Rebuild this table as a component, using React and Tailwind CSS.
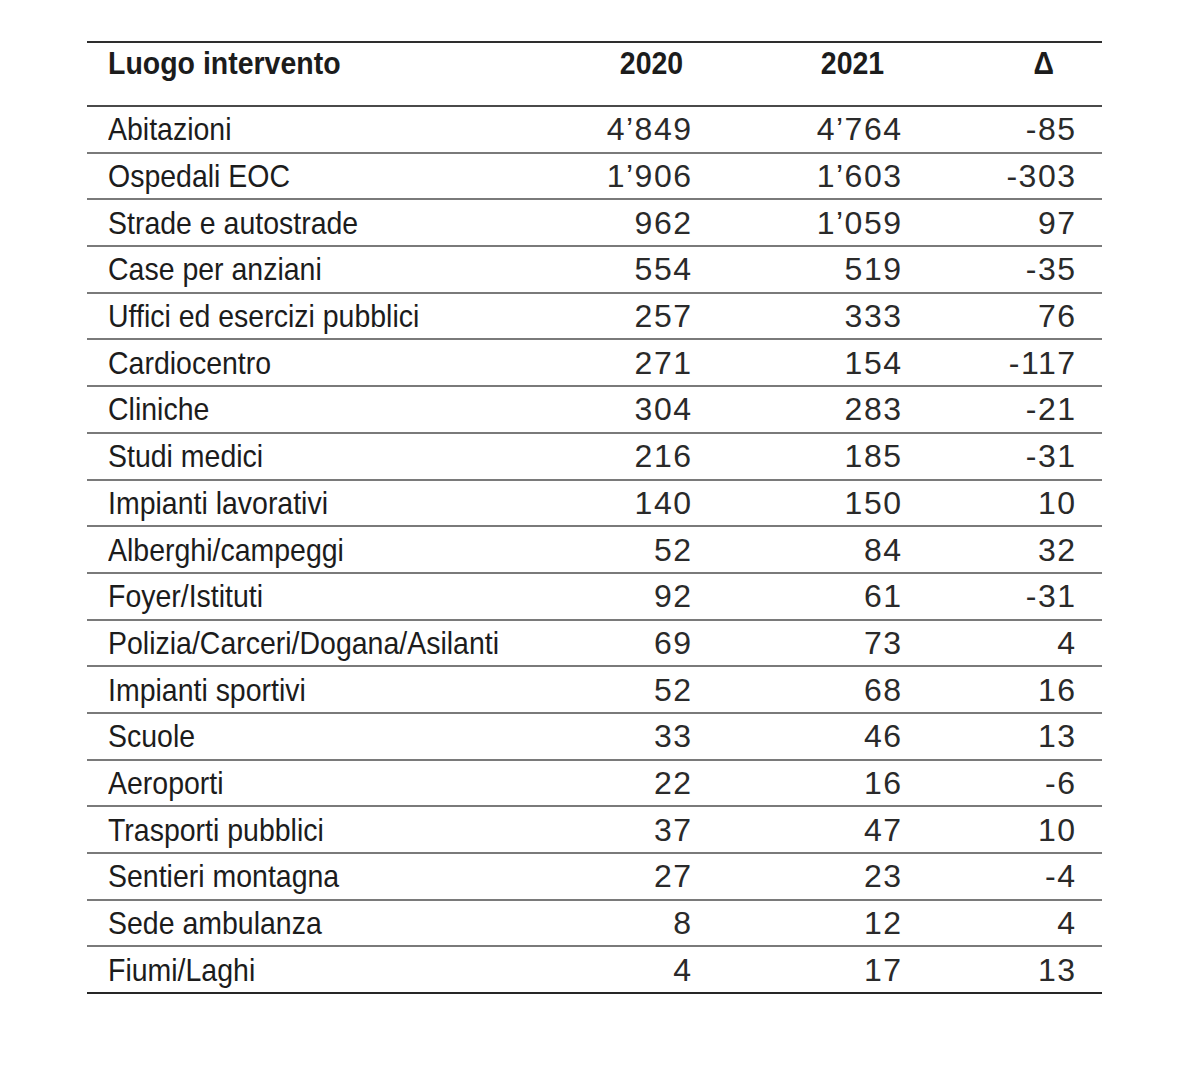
import React from "react";

const rows = [
  ["Abitazioni", "4’849", "4’764", "-85"],
  ["Ospedali EOC", "1’906", "1’603", "-303"],
  ["Strade e autostrade", "962", "1’059", "97"],
  ["Case per anziani", "554", "519", "-35"],
  ["Uffici ed esercizi pubblici", "257", "333", "76"],
  ["Cardiocentro", "271", "154", "-117"],
  ["Cliniche", "304", "283", "-21"],
  ["Studi medici", "216", "185", "-31"],
  ["Impianti lavorativi", "140", "150", "10"],
  ["Alberghi/campeggi", "52", "84", "32"],
  ["Foyer/Istituti", "92", "61", "-31"],
  ["Polizia/Carceri/Dogana/Asilanti", "69", "73", "4"],
  ["Impianti sportivi", "52", "68", "16"],
  ["Scuole", "33", "46", "13"],
  ["Aeroporti", "22", "16", "-6"],
  ["Trasporti pubblici", "37", "47", "10"],
  ["Sentieri montagna", "27", "23", "-4"],
  ["Sede ambulanza", "8", "12", "4"],
  ["Fiumi/Laghi", "4", "17", "13"],
];

// narrow sans look: Liberation Sans squeezed horizontally
function Narrow({ children, right }) {
  return (
    <span className={"inline-block whitespace-nowrap scale-x-[0.89] " + (right ? "origin-right" : "origin-left")}>
      {children}
    </span>
  );
}

function Num({ children }) {
  return <span className="mr-[-1.5px] tracking-[1.5px]">{children}</span>;
}

export default function App() {
  return (
    <div className="min-h-[1072px] bg-white pt-[41px] pl-[87px] font-['Liberation_Sans',Arial,sans-serif] text-[32px] leading-[32px] text-[#1c1c1c]">
      <div className="w-[1015px]">
        <div className="grid h-[66px] grid-cols-[minmax(0,1fr)_150px_210px_174px] border-y-2 border-t-[#2e2e2e] border-b-[#4a4a4a] pl-[21px] pr-[27px] pt-[4px] font-bold">
          <div className="min-w-0"><Narrow>Luogo intervento</Narrow></div>
          <div className="pr-[8px] text-right"><Narrow right>2020</Narrow></div>
          <div className="pr-[17px] text-right"><Narrow right>2021</Narrow></div>
          <div className="pr-[21px] text-right"><Narrow right>Δ</Narrow></div>
        </div>
        {rows.map((r, i) => (
          <div
            key={r[0]}
            className={
              "grid h-[46.7px] grid-cols-[minmax(0,1fr)_150px_210px_174px] items-center border-b-2 pl-[21px] pr-[27px] " +
              (i === rows.length - 1 ? "border-[#262626]" : "border-[#7a7a7a]")
            }
          >
            <div className="min-w-0"><Narrow>{r[0]}</Narrow></div>
            <div className="text-right text-[#2a2a2a]"><Num>{r[1]}</Num></div>
            <div className="text-right text-[#2a2a2a]"><Num>{r[2]}</Num></div>
            <div className="text-right text-[#2a2a2a]"><Num>{r[3]}</Num></div>
          </div>
        ))}
      </div>
    </div>
  );
}
